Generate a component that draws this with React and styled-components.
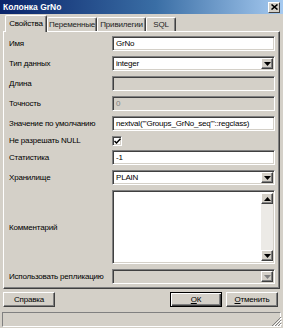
import React from "react";
import styled, { createGlobalStyle, css } from "styled-components";

const Global = createGlobalStyle`
  html, body { margin: 0; padding: 0; background: #d4d0c8; }
  body { font-family: "Liberation Sans", Arial, sans-serif; font-size: 8px; letter-spacing: -0.2px; color: #000; }
  * { box-sizing: border-box; }
`;

const Window = styled.div`
  width: 283px;
  height: 328px;
  background: #d4d0c8;
  display: flex;
  flex-direction: column;
  overflow: hidden;
`;

const TitleBar = styled.div`
  height: 14px;
  display: flex;
  align-items: center;
  justify-content: space-between;
  padding: 0 3px 0 3px;
  background: linear-gradient(to right, #0a246a, #3a6ea5 55%, #a6caf0);
`;

const Title = styled.span`
  color: #fff;
  font-weight: bold;
  font-size: 8.5px;
  letter-spacing: 0;
`;

const CloseBtn = styled.div`
  width: 12px;
  height: 11px;
  background: #d4d0c8;
  border-top: 1px solid #fff;
  border-left: 1px solid #fff;
  border-right: 1px solid #404040;
  border-bottom: 1px solid #404040;
  display: flex;
  align-items: center;
  justify-content: center;
`;

const TabStrip = styled.div`
  display: flex;
  align-items: flex-end;
  height: 16px;
  margin-top: 1px;
  padding-left: 5px;
  position: relative;
  z-index: 2;
`;

const Tab = styled.div`
  width: ${(p) => p.$w}px;
  height: ${(p) => (p.$active ? 17 : 14)}px;
  margin-bottom: ${(p) => (p.$active ? -1 : 0)}px;
  display: flex;
  align-items: center;
  justify-content: center;
  padding-bottom: ${(p) => (p.$active ? 2 : 0)}px;
  background: #d4d0c8;
  border-top: 1px solid #fff;
  border-left: 1px solid #fff;
  border-right: 1px solid #404040;
  box-shadow: inset -1px 0 #808080;
  border-radius: 2px 2px 0 0;
  color: ${(p) => (p.$active ? "#000" : "#222")};
`;

const Panel = styled.div`
  margin: 0 3px 0 3px;
  height: 258px;
  border-top: 1px solid #fff;
  border-left: 1px solid #fff;
  border-right: 1px solid #404040;
  border-bottom: 1px solid #404040;
  box-shadow: inset -1px -1px #808080;
  padding: 4px 3px 0 4px;
`;

const Form = styled.div`
  display: grid;
  grid-template-columns: 104px 163px;
  grid-template-rows: 15px 15px 15px 15px 15px 9px 15px 15px 74px 15px;
  row-gap: 5px;
  align-items: center;
`;

const Label = styled.div`
  padding-left: 1px;
  white-space: nowrap;
  color: #000;
`;

const sunken = css`
  border-top: 1px solid #808080;
  border-left: 1px solid #808080;
  border-right: 1px solid #fff;
  border-bottom: 1px solid #fff;
  box-shadow: inset 1px 1px #404040, inset -1px -1px #d4d0c8;
`;

const raised = css`
  border-top: 1px solid #fff;
  border-left: 1px solid #fff;
  border-right: 1px solid #404040;
  border-bottom: 1px solid #404040;
  box-shadow: inset -1px -1px #808080;
`;

const Field = styled.div`
  ${sunken};
  height: 15px;
  background: ${(p) => (p.$disabled ? "#d4d0c8" : "#fff")};
  color: ${(p) => (p.$disabled ? "#808080" : "#000")};
  display: flex;
  align-items: center;
  padding: 0 2px 0 3px;
  white-space: nowrap;
  overflow: hidden;
  align-self: stretch;
`;

const FieldText = styled.span`
  flex: 1;
  overflow: hidden;
`;

const DropBtn = styled.div`
  ${raised};
  width: 12px;
  height: 11px;
  background: #d4d0c8;
  display: flex;
  align-items: center;
  justify-content: center;
  flex: none;
  margin-right: -1px;
`;

const Arrow = ({ up, color = "#000" }) => (
  <svg width="7" height="4" viewBox="0 0 7 4">
    {up ? (
      <path d="M3.5 0 L7 4 L0 4 Z" fill={color} />
    ) : (
      <path d="M0 0 L7 0 L3.5 4 Z" fill={color} />
    )}
  </svg>
);

const Select = ({ value, disabled }) => (
  <Field $disabled={disabled}>
    <FieldText>{value}</FieldText>
    <DropBtn>
      <Arrow color={disabled ? "#808080" : "#000"} />
    </DropBtn>
  </Field>
);

const CheckBox = styled.div`
  ${sunken};
  width: 10px;
  height: 10px;
  background: #fff;
  display: flex;
  align-items: center;
  justify-content: center;
`;

const TextArea = styled.div`
  ${sunken};
  height: 74px;
  background: #fff;
  display: flex;
  justify-content: flex-end;
  padding: 2px 1px 2px 2px;
  align-self: stretch;
`;

const ScrollBar = styled.div`
  width: 12px;
  display: flex;
  flex-direction: column;
  justify-content: space-between;
  background: #eceae6;
`;

const ScrollBtn = styled.div`
  ${raised};
  width: 12px;
  height: 11px;
  background: #d4d0c8;
  display: flex;
  align-items: center;
  justify-content: center;
`;

const ButtonRow = styled.div`
  display: flex;
  align-items: center;
  margin: 3px 5px 0 3px;
  height: 15px;
`;

const Button = styled.div`
  width: 52px;
  height: 15px;
  ${raised};
  background: #d4d0c8;
  display: flex;
  align-items: center;
  justify-content: center;
  margin-left: ${(p) => (p.$ml ? p.$ml : 0)}px;
  ${(p) =>
    p.$default &&
    css`
      border: 1px solid #000;
      box-shadow: inset 1px 1px #fff, inset -1px -1px #404040, inset -2px -2px #808080;
    `}
`;

const Spacer = styled.div`
  flex: 1;
`;

const U = styled.span`
  text-decoration: underline;
`;

const StatusBar = styled.div`
  margin: 3px 0 0 0;
  height: 18px;
  display: flex;
  align-items: stretch;
  padding: 2px 2px 1px 2px;
  position: relative;
`;

const StatusPane = styled.div`
  flex: 1;
  border-top: 1px solid #808080;
  border-left: 1px solid #808080;
  border-right: 1px solid #fff;
  border-bottom: 1px solid #fff;
`;

const Grip = styled.svg`
  position: absolute;
  right: 1px;
  bottom: 1px;
`;

export default function App() {
  return (
    <>
      <Global />
      <Window>
        <TitleBar>
          <Title>Колонка GrNo</Title>
          <CloseBtn>
            <svg width="7" height="6" viewBox="0 0 7 6">
              <path d="M0.5 0.5 L6.5 5.5 M6.5 0.5 L0.5 5.5" stroke="#000" strokeWidth="1.6" />
            </svg>
          </CloseBtn>
        </TitleBar>
        <TabStrip>
          <Tab $active $w={42}>Свойства</Tab>
          <Tab $w={50}>Переменные</Tab>
          <Tab $w={49}>Привилегии</Tab>
          <Tab $w={30}>SQL</Tab>
        </TabStrip>
        <Panel>
          <Form>
            <Label>Имя</Label>
            <Field>GrNo</Field>
            <Label>Тип данных</Label>
            <Select value="integer" />
            <Label>Длина</Label>
            <Field $disabled />
            <Label>Точность</Label>
            <Field $disabled>0</Field>
            <Label>Значение по умолчанию</Label>
            <Field>nextval('"Groups_GrNo_seq"'::regclass)</Field>
            <Label>Не разрешать NULL</Label>
            <CheckBox>
              <svg width="7" height="6" viewBox="0 0 7 6">
                <path d="M0.5 3 L2.5 5 L6.5 0.8" stroke="#000" strokeWidth="1.5" fill="none" />
              </svg>
            </CheckBox>
            <Label>Статистика</Label>
            <Field>-1</Field>
            <Label>Хранилище</Label>
            <Select value="PLAIN" />
            <Label>Комментарий</Label>
            <TextArea>
              <ScrollBar>
                <ScrollBtn>
                  <Arrow up color="#000" />
                </ScrollBtn>
                <ScrollBtn>
                  <Arrow color="#000" />
                </ScrollBtn>
              </ScrollBar>
            </TextArea>
            <Label>Использовать репликацию</Label>
            <Select value="" disabled />
          </Form>
        </Panel>
        <ButtonRow>
          <Button>Справка</Button>
          <Spacer />
          <Button $default>
            <U>О</U>К
          </Button>
          <Button $ml={4}>
            <U>О</U>тменить
          </Button>
        </ButtonRow>
        <StatusBar>
          <StatusPane />
          <Grip width="12" height="12" viewBox="0 0 12 12">
            <path d="M11 2 L2 11 M11 5 L5 11 M11 8 L8 11" stroke="#808080" strokeWidth="1" />
            <path d="M12 3 L3 12 M12 6 L6 12 M12 9 L9 12" stroke="#fff" strokeWidth="1" />
          </Grip>
        </StatusBar>
      </Window>
    </>
  );
}
